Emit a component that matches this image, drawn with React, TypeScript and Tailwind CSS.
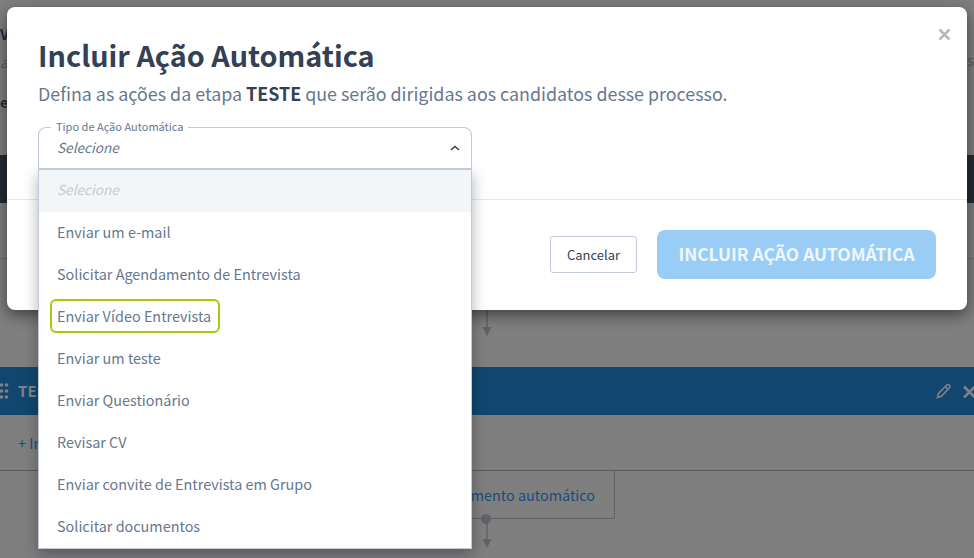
const options = [
  "Enviar um e-mail",
  "Solicitar Agendamento de Entrevista",
  "Enviar Vídeo Entrevista",
  "Enviar um teste",
  "Enviar Questionário",
  "Revisar CV",
  "Enviar convite de Entrevista em Grupo",
  "Solicitar documentos",
]

function Arrow() {
  return (
    <svg width="10" height="30" viewBox="0 0 10 30" className="block">
      <path d="M5 0V22" stroke="#5f6368" strokeWidth="1.5" />
      <path d="M0.5 20H9.5L5 29Z" fill="#5f6368" />
    </svg>
  )
}

function Background() {
  return (
    <div className="h-[558px] w-[974px] overflow-hidden bg-[#7f7f7f]">
      <div className="flex h-[155px] justify-between pt-[20px] text-[14.4px] leading-[28px] text-[#2a2f36]">
        <div>
          <p className="font-bold text-[#1f2a44]">V</p>
          <p className="italic text-[#555b64]">a</p>
          <p className="mt-[12px] font-bold">es</p>
        </div>
        <p className="mt-[26px] pl-[4px] text-[#555b64]">ss</p>
      </div>
      <div className="h-[48px] bg-[#232c36]" />
      <div className="mt-[55px] h-px bg-[#6b6d70]" />
      <div className="flex h-[108px] flex-col items-center pr-[1px]">
        <div className="mt-[48px]">
          <Arrow />
        </div>
      </div>
      <div className="flex h-[48px] items-center justify-between bg-[#12466f] text-[#7f8388]">
        <div className="flex items-center gap-[9px]">
          <svg width="9" height="16" viewBox="0 0 9 16" fill="#7f8388">
            <circle cx="1.5" cy="2" r="1.8" />
            <circle cx="6.5" cy="2" r="1.8" />
            <circle cx="1.5" cy="8" r="1.8" />
            <circle cx="6.5" cy="8" r="1.8" />
            <circle cx="1.5" cy="14" r="1.8" />
            <circle cx="6.5" cy="14" r="1.8" />
          </svg>
          <span className="text-[15px] font-bold">TES</span>
        </div>
        <div className="flex items-center gap-[12px]">
          <svg width="15" height="16" viewBox="0 0 15 16" fill="none" stroke="#7f8388" strokeWidth="1.6">
            <path d="M1.5 14.5L2.5 10.5L10.5 2.2C11.4 1.3 12.8 1.4 13.5 2.2C14.2 3 14.1 4.2 13.3 5L5.3 13.3Z" />
            <path d="M9.2 3.6L12 6.4" />
          </svg>
          <svg width="11" height="13" viewBox="0 0 11 13" stroke="#7f8388" strokeWidth="2.6">
            <path d="M1 1.5L12 12.5M12 1.5L1 12.5" />
          </svg>
        </div>
      </div>
      <div className="flex h-[56px] items-center border-b border-[#58595c] pl-[18px] text-[14.4px] text-[#1c4b7a]">
        + In
      </div>
      <div className="flex justify-end pr-[359px]">
        <div className="relative flex h-[48px] w-[300px] items-center justify-end rounded-br-[3px] border-b border-r border-[#5f6165] pr-[19px] text-[14.4px] text-[#1c4b7a]">
          mento automático
          <span className="absolute bottom-[-6px] right-[123px] h-[10px] w-[10px] rounded-full bg-[#5f6368]" />
        </div>
      </div>
      <div className="flex justify-center pr-[1px]">
        <Arrow />
      </div>
    </div>
  )
}

export default function App() {
  return (
    <div className="relative h-[558px] w-[974px] overflow-hidden font-['Noto_Sans_CJK_SC',sans-serif]">
      <Background />

      <div className="absolute left-[7px] top-[7px] h-[303px] w-[960px] rounded-[8px] bg-white shadow-[0_5px_15px_rgba(0,0,0,0.5)]">
        <button className="absolute right-[16px] top-[21px] text-[#b3b9c2]">
          <svg width="13" height="13" viewBox="0 0 13 13" stroke="currentColor" strokeWidth="2.6" className="block">
            <path d="M1.5 1.5L11.5 11.5M11.5 1.5L1.5 11.5" />
          </svg>
        </button>

        <div className="h-[193px] border-b border-[#e5e7eb] pl-[31px] pt-[28px]">
          <h1 className="text-[28.8px] font-bold leading-[40px] text-[#344054]">Incluir Ação Automática</h1>
          <p className="mt-[4px] text-[17.87px] leading-[28px] text-[#667790]">
            Defina as ações da etapa <b className="font-bold text-[#344054]">TESTE</b> que serão dirigidas aos candidatos desse processo.
          </p>
        </div>

        <div className="flex justify-end gap-[20px] pr-[31px] pt-[30px]">
          <button className="mt-[6px] h-[37px] w-[87px] rounded-[3px] border border-[#c0cad8] bg-white text-[13px] text-[#344054]">
            Cancelar
          </button>
          <button className="h-[49px] w-[279px] rounded-[8px] bg-[#9acdf5] text-[17.4px] font-bold text-[#eef7fe]">
            INCLUIR AÇÃO AUTOMÁTICA
          </button>
        </div>
      </div>

      <div className="absolute left-[38px] top-[127px] w-[434px]">
        <div className="relative h-[41px] rounded-t-[8px] border border-b-0 border-[#c0cad8] bg-white pl-[18px] pt-[7px] text-[13.6px] italic leading-[24px] text-[#667790]">
          <span className="absolute left-[12px] top-[-9px] bg-white px-[5px] text-[11px] not-italic leading-[14px] text-[#667790]">
            Tipo de Ação Automática
          </span>
          Selecione
          <svg width="10" height="6" viewBox="0 0 10 6" fill="none" stroke="#344054" strokeWidth="1.5" className="absolute right-[11px] top-[17px]">
            <path d="M1 5L5 1.5L9 5" />
          </svg>
        </div>
        <div className="border border-t-2 border-[#c0cad8] bg-white shadow-[0_6px_14px_rgba(0,0,0,0.3)]">
          <div className="flex h-[42px] items-center bg-[#f3f6f9] pb-[3px] pl-[18px] text-[13.6px] italic text-[#c3c9d1]">Selecione</div>
          {options.map((option, i) => (
            <div key={option} className="flex h-[42px] items-center pb-[2px] pl-[18px] text-[14.4px] text-[#667790]">
              {i === 2 ? (
                <span className="ml-[-7px] flex h-[34px] items-center rounded-[6px] border-2 border-[#a4cc0a] pl-[5px] pr-[7px]">{option}</span>
              ) : (
                option
              )}
            </div>
          ))}
        </div>
      </div>
    </div>
  )
}
